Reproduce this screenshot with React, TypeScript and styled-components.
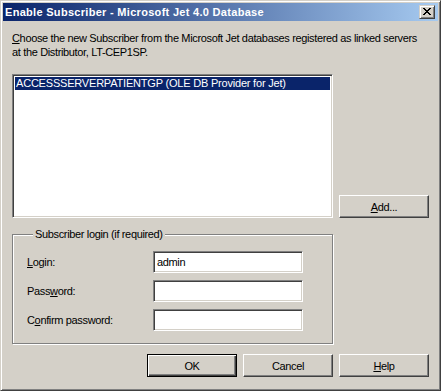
import React from "react";
import styled, { createGlobalStyle, css } from "styled-components";

const GlobalStyle = createGlobalStyle`
  html, body { margin: 0; padding: 0; background: #d4d0c8; }
  body {
    font-family: "Liberation Sans", Arial, sans-serif;
    font-size: 11px;
    letter-spacing: -0.35px;
    color: #000;
  }
  * { box-sizing: border-box; }
`;

const Window = styled.div`
  width: 441px;
  height: 391px;
  display: flex;
  flex-direction: column;
  background: #d4d0c8;
  border: 1px solid;
  border-color: #d4d0c8 #404040 #404040 #d4d0c8;
  box-shadow: inset 1px 1px #ffffff, inset -1px -1px #808080;
  padding: 2px;
`;

const TitleBar = styled.div`
  height: 18px;
  display: flex;
  align-items: center;
  padding: 0 2px 0 2px;
  background: linear-gradient(to right, #0a246a, #a6caf0);
`;

const TitleText = styled.span`
  color: #fff;
  font-weight: bold;
  font-size: 11px;
  letter-spacing: 0.3px;
  line-height: 13px;
  white-space: nowrap;
`;

const CloseButton = styled.div`
  width: 16px;
  height: 14px;
  margin-left: auto;
  margin-right: 1px;
  display: flex;
  align-items: center;
  justify-content: center;
  padding: 0 1px 1px 0;
  background: #d4d0c8;
  border: 1px solid;
  border-color: #d4d0c8 #404040 #404040 #d4d0c8;
  box-shadow: inset 1px 1px #ffffff, inset -1px -1px #808080;
`;

const Body = styled.div`
  flex: 1;
  display: flex;
  flex-direction: column;
  padding: 10px 9px 10px 9px;
`;

const Description = styled.p`
  margin: 0 0 15px 0;
  line-height: 14px;
  white-space: nowrap;
`;

const ListRow = styled.div`
  display: flex;
  gap: 6px;
  height: 144px;
`;

const sunken = css`
  border: 1px solid;
  border-color: #808080 #ffffff #ffffff #808080;
  box-shadow: inset 1px 1px #404040, inset -1px -1px #d4d0c8;
  background: #fff;
`;

const ListBox = styled.div`
  ${sunken};
  width: 321px;
  height: 144px;
  padding: 2px 2px;
`;

const ListItem = styled.div<{ $selected?: boolean }>`
  height: 13px;
  line-height: 13px;
  padding-left: 1px;
  letter-spacing: -0.2px;
  white-space: nowrap;
  background: ${(p) => (p.$selected ? "#0a246a" : "transparent")};
  color: ${(p) => (p.$selected ? "#fff" : "#000")};
`;

const SideColumn = styled.div`
  display: flex;
  flex-direction: column;
  justify-content: flex-end;
`;

const Button = styled.button<{ $default?: boolean }>`
  width: 90px;
  height: 23px;
  padding: 0;
  font-family: inherit;
  font-size: 11px;
  letter-spacing: inherit;
  color: #000;
  background: #d4d0c8;
  border: 1px solid;
  ${(p) =>
    p.$default
      ? css`
          border-color: #000;
          box-shadow: inset 1px 1px #ffffff, inset -1px -1px #404040,
            inset -2px -2px #808080;
        `
      : css`
          border-color: #ffffff #404040 #404040 #ffffff;
          box-shadow: inset -1px -1px #808080;
        `}
`;

const GroupBox = styled.fieldset`
  width: 321px;
  margin: 10px 0 0 0;
  padding: 10px 0 12px 14px;
  border: 1px solid #808080;
  box-shadow: inset 1px 1px #ffffff, 1px 1px #ffffff;
`;

const GroupLegend = styled.legend`
  margin-left: 6px;
  padding: 0 2px 0 2px;
  line-height: 13px;
  background: #d4d0c8;
`;

const FieldGrid = styled.div`
  display: grid;
  grid-template-columns: 126px 150px;
  grid-auto-rows: 22px;
  row-gap: 7px;
  align-items: center;
`;

const Label = styled.label`
  line-height: 13px;
`;

const TextBox = styled.div`
  ${sunken};
  width: 150px;
  height: 22px;
  padding: 2px 3px;
  line-height: 14px;
  display: flex;
  align-items: center;
`;

const ButtonRow = styled.div`
  display: flex;
  justify-content: flex-end;
  gap: 6px;
  margin-top: 10px;
`;

export default function App() {
  return (
    <>
      <GlobalStyle />
      <Window>
        <TitleBar>
          <TitleText>Enable Subscriber - Microsoft Jet 4.0 Database</TitleText>
          <CloseButton>
            <svg width="8" height="7" viewBox="0 0 8 7">
              <path
                d="M0 0h2v1h1v1h2v-1h1v-1h2v1h-1v1h-1v1h-1v1h1v1h1v1h1v1h-2v-1h-1v-1h-2v1h-1v1h-2v-1h1v-1h1v-1h1v-1h-1v-1h-1v-1h-1z"
                fill="#000"
              />
            </svg>
          </CloseButton>
        </TitleBar>
        <Body>
          <Description>
            <u>C</u>hoose the new Subscriber from the Microsoft Jet databases registered as linked servers
            <br />
            at the Distributor, LT-CEP1SP.
          </Description>
          <ListRow>
            <ListBox>
              <ListItem $selected>ACCESSSERVERPATIENTGP (OLE DB Provider for Jet)</ListItem>
            </ListBox>
            <SideColumn>
              <Button>
                <u>A</u>dd...
              </Button>
            </SideColumn>
          </ListRow>
          <GroupBox>
            <GroupLegend>Subscriber login (if required)</GroupLegend>
            <FieldGrid>
              <Label>
                <u>L</u>ogin:
              </Label>
              <TextBox>admin</TextBox>
              <Label>
                Pass<u>w</u>ord:
              </Label>
              <TextBox />
              <Label>
                C<u>o</u>nfirm password:
              </Label>
              <TextBox />
            </FieldGrid>
          </GroupBox>
          <ButtonRow>
            <Button $default>OK</Button>
            <Button>Cancel</Button>
            <Button>
              <u>H</u>elp
            </Button>
          </ButtonRow>
        </Body>
      </Window>
    </>
  );
}
